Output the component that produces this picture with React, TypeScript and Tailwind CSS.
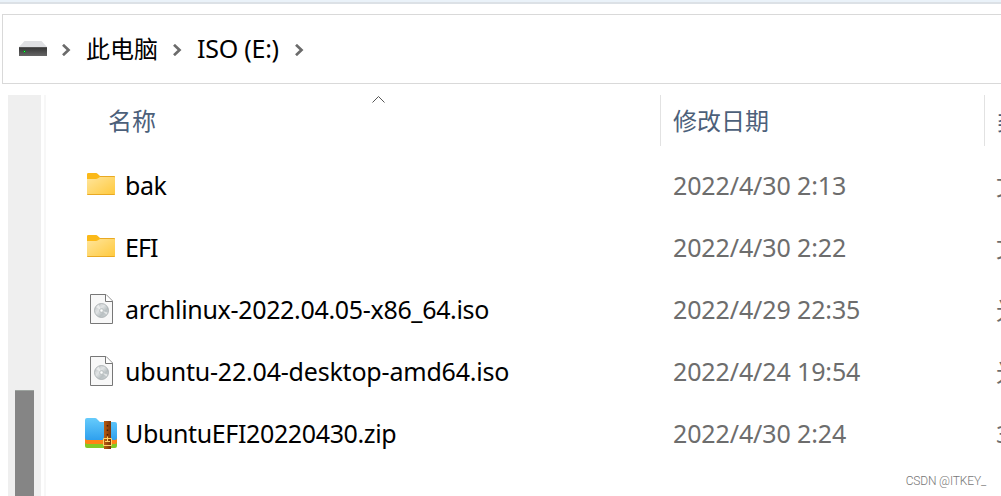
import type { ReactNode } from 'react'

const cjk = 'font-["Noto_Sans","Noto_Sans_CJK_SC",sans-serif]'

function Chevron() {
  return (
    <svg className="mt-0.5 h-3 w-2.5 shrink-0" viewBox="0 0 10 12" fill="none">
      <path d="M2 .8 7.500 6 2 11.200" stroke="#6b6b6b" strokeWidth="2.700" />
    </svg>
  )
}

function DriveIcon() {
  return (
    <svg className="mb-0.5 h-[15px] w-7 shrink-0" viewBox="0 0 28 15">
      <defs>
        <linearGradient id="drive" x1="0" y1="0" x2="0" y2="1">
          <stop offset="0" stopColor="#333" />
          <stop offset="1" stopColor="#666" />
        </linearGradient>
      </defs>
      <path d="M5.5 0h17L28 6H0z" fill="#dfe0e3" />
      <path d="M0 6h28v9H0z" fill="url(#drive)" />
      <path d="M0 6h28v1H0z" fill="#555" />
      <path d="M4 10.500h3M5.500 9v3" stroke="#0b8a20" />
      <path d="M5 10h1v1H5z" fill="#2cff50" />
    </svg>
  )
}

function FolderIcon() {
  return (
    <svg className="mb-1 h-[22px] w-7" viewBox="0 0 28 22">
      <defs>
        <linearGradient id="folder" x1="0" y1="0" x2="1" y2="1">
          <stop offset="0" stopColor="#ffe59b" />
          <stop offset="1" stopColor="#ffc93c" />
        </linearGradient>
      </defs>
      <path d="M0 1.200Q0 0 1.200 0H9q1 0 1.800.9L13 3h14q1 0 1 1v4H0z" fill="#fbb918" />
      <path d="M0 6h9q1 0 2-.8L13 4h14q1 0 1 1v16q0 1-1 1H1q-1 0-1-1z" fill="url(#folder)" />
      <path d="M.3 21.500h27.400M13 3.500h14.500" stroke="#e9a923" />
    </svg>
  )
}

function DiscIcon() {
  return (
    <svg className="mb-0.5 h-[30px] w-[23px]" viewBox="0 0 23 30">
      <defs>
        <linearGradient id="disc" x1="0" y1="0" x2="1" y2="1">
          <stop offset="0" stopColor="#b5b9bb" />
          <stop offset=".4" stopColor="#e1e4e5" />
          <stop offset=".65" stopColor="#b9c0c2" />
          <stop offset="1" stopColor="#d5dadb" />
        </linearGradient>
      </defs>
      <path d="M.5.5H16l6.500 6.500v22.500H.5z" fill="#f8f8f8" stroke="#777" />
      <path d="M15.500.5v7h7" fill="#fff" stroke="#777" />
      <circle cx="11.500" cy="16.500" r="7" fill="url(#disc)" stroke="#a5abad" strokeWidth=".8" />
      <path d="m11.500 16.500-5.500-3.500 2.500-2.500zM11.500 16.500l5 4 1-2z" fill="#f4f5f5" opacity=".7" />
      <circle cx="11.500" cy="16.500" r="2" fill="#e9ecec" stroke="#aab0b2" strokeWidth=".6" />
      <circle cx="11.500" cy="16.500" r=".7" fill="#fff" />
    </svg>
  )
}

function ZipIcon() {
  return (
    <svg className="mb-px h-[31px] w-8" viewBox="0 0 32 31">
      <defs>
        <linearGradient id="zip" x1="0" y1="0" x2="0" y2="1">
          <stop offset="0" stopColor="#66cbfb" />
          <stop offset="1" stopColor="#2fa0ee" />
        </linearGradient>
        <linearGradient id="strap" x1="0" y1="0" x2="1" y2="0">
          <stop offset="0" stopColor="#b85c12" />
          <stop offset="1" stopColor="#7b3508" />
        </linearGradient>
      </defs>
      <path d="M0 22h32v6q0 2-2 2H2q-2 0-2-2z" fill="#83c926" />
      <path d="M0 20h32v4q0 2-2 2H2q-2 0-2-2z" fill="#ff8214" />
      <path d="M0 2q0-2 2-2h8q1.300 0 2.200 1.200L15 4h15q2 0 2 2v14q0 2-2 2H2q-2 0-2-2z" fill="url(#zip)" />
      <path d="M19 3h7v28h-7z" fill="url(#strap)" />
      <path d="M22.500 7v11" stroke="#4c2108" strokeWidth="1.500" strokeDasharray="1.500 3" />
      <path d="M18.500 20.500h8v7h-8zM22.500 18.500v5M20 23.500h5" fill="none" stroke="#ffd469" />
    </svg>
  )
}

type FileRow = { name: string; date: string; kind: string; icon: ReactNode; tracking: string }

const files: FileRow[] = [
  {
    name: 'bak',
    date: '2022/4/30 2:13',
    kind: '文件夹',
    icon: <FolderIcon />,
    tracking: 'tracking-[-0.4px]',
  },
  {
    name: 'EFI',
    date: '2022/4/30 2:22',
    kind: '文件夹',
    icon: <FolderIcon />,
    tracking: 'tracking-[-0.9px]',
  },
  {
    name: 'archlinux-2022.04.05-x86_64.iso',
    date: '2022/4/29 22:35',
    kind: '光盘映像文件',
    icon: <DiscIcon />,
    tracking: 'tracking-[-0.32px]',
  },
  {
    name: 'ubuntu-22.04-desktop-amd64.iso',
    date: '2022/4/24 19:54',
    kind: '光盘映像文件',
    icon: <DiscIcon />,
    tracking: 'tracking-[-0.2px]',
  },
  {
    name: 'UbuntuEFI20220430.zip',
    date: '2022/4/30 2:24',
    kind: '360压缩',
    icon: <ZipIcon />,
    tracking: 'tracking-[-0.37px]',
  },
]

function AddressBar() {
  return (
    <div className="ml-0.5 mt-2.5 flex h-[70px] items-center border border-r-0 border-[#d9d9d9] pl-4 text-2xl">
      <DriveIcon />
      <div className="ml-3.5 flex items-center">
        <Chevron />
        <span className="ml-[15px] w-[86px]">此电脑</span>
        <Chevron />
        <span className="ml-[15px] w-[97px] text-[25px] tracking-[-0.25px]">ISO (E:)</span>
        <Chevron />
      </div>
    </div>
  )
}

function ColumnHeaders() {
  return (
    <div className="flex h-[51px] text-2xl text-[#4c607a]">
      <div className="grid w-[614px] shrink-0 grid-cols-[326px_14px_1fr]">
        <span className="pl-[62px] pt-2.5">名称</span>
        <svg className="h-2.5 w-3.5" viewBox="0 0 14 10" fill="none">
          <path d="m.5 7.500 6-6 6 6" stroke="#555" />
        </svg>
      </div>
      <span className="w-[324px] shrink-0 border-l border-[#e2e2e2] pl-3 pt-2.5">修改日期</span>
      <span className="border-l border-[#e2e2e2] pl-3 pt-2.5">类型</span>
    </div>
  )
}

export default function App() {
  return (
    <div className={`relative flex h-[496px] w-[1001px] flex-col overflow-hidden bg-white text-black ${cjk}`}>
      <div className="h-1 shrink-0 border-b-2 border-[#dce1e6] bg-[#eaf2f9]" />
      <AddressBar />
      <div className="ml-2 mt-[11px] flex min-h-0 flex-1">
        <div className="flex w-[33px] shrink-0 flex-col items-center bg-[#efefef] pr-px">
          <div className="mt-[295px] w-[19px] flex-1 border-t border-[#9da39f] bg-[#858585]" />
        </div>
        <div className="ml-[3px] w-[957px] shrink-0 border-l-2 border-[#f7f7f7] whitespace-nowrap">
          <ColumnHeaders />
          <div className="mt-[9px]">
            {files.map((file) => (
              <div key={file.name} className="flex h-[62px] items-center text-[25px]">
                <div className="ml-[37px] flex w-9 shrink-0 justify-center">{file.icon}</div>
                <span className={`ml-1.5 w-[548px] shrink-0 ${file.tracking}`}>{file.name}</span>
                <span className="w-[323px] shrink-0 tracking-[-0.12px] text-[#6d6d6d]">
                  {file.date}
                </span>
                <span className="text-2xl text-[#6d6d6d]">{file.kind}</span>
              </div>
            ))}
          </div>
        </div>
      </div>
      <span className="absolute bottom-[7px] right-[15px] font-['Roboto',sans-serif] text-xs leading-4 font-light tracking-[-0.15px] text-[#777]">
        CSDN @ITKEY_
      </span>
    </div>
  )
}
